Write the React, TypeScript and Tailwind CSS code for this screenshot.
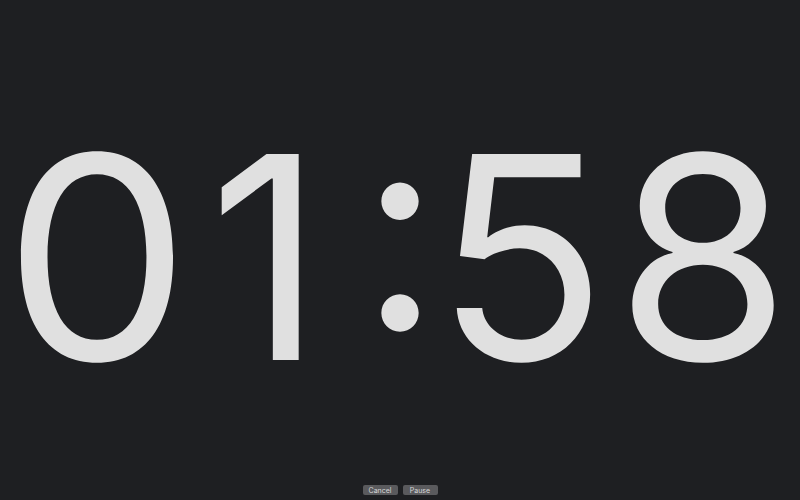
import React from "react";

const chars = [
  { c: "0", w: "w-[182px] scale-x-[1.05]" },
  { c: "1", w: "w-[182px] pr-[26px]" },
  { c: ":", w: "w-[60px]" },
  { c: "5", w: "w-[182px]" },
  { c: "8", w: "w-[182px]" },
];

export default function App() {
  return (
    <div className="flex h-[500px] w-[800px] flex-col bg-[#1e1f22] font-['Inter','Liberation_Sans',sans-serif]">
      <div className="flex flex-1 items-center justify-center pt-[29px]">
        <div className="flex whitespace-nowrap text-[283px] leading-none font-normal text-[#e0e0e0] [font-feature-settings:'case'_1]">
          {chars.map((ch, i) => (
            <span key={i} className={`${ch.w} flex justify-center`}>
              {ch.c}
            </span>
          ))}
        </div>
      </div>
      <div className="flex justify-center gap-[5px] pb-[5px]">
        <button className="flex h-[10px] w-[35px] items-center justify-center rounded-[2px] bg-[#5a5a5d] text-[7px] leading-none text-[#d8d8d8]">
          Cancel
        </button>
        <button className="flex h-[10px] w-[35px] items-center justify-center rounded-[2px] bg-[#5a5a5d] text-[7px] leading-none text-[#d8d8d8]">
          Pause
        </button>
      </div>
    </div>
  );
}
